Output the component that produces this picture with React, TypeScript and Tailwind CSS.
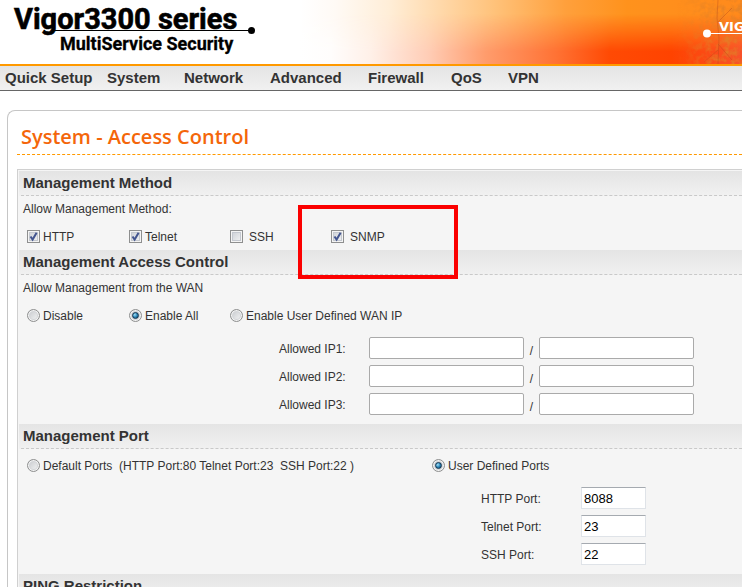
import type { ReactNode } from "react";

const navItems = [
  { label: "Quick Setup", width: "w-[102px]" },
  { label: "System", width: "w-[77px]" },
  { label: "Network", width: "w-[86px]" },
  { label: "Advanced", width: "w-[98px]" },
  { label: "Firewall", width: "w-[83px]" },
  { label: "QoS", width: "w-[57px]" },
  { label: "VPN", width: "w-[60px]" },
];

const allowedIps = ["Allowed IP1:", "Allowed IP2:", "Allowed IP3:"];

const ports = [
  { id: "http-port", label: "HTTP Port:", value: "8088" },
  { id: "telnet-port", label: "Telnet Port:", value: "23" },
  { id: "ssh-port", label: "SSH Port:", value: "22" },
];

function Logo() {
  return (
    <svg width="300" height="64" viewBox="0 0 300 64" className="shrink-0" fontFamily="Roboto, 'Liberation Sans', sans-serif" fontWeight="bold">
      <text x="14" y="29" fontSize="29" stroke="#000" strokeWidth="0.6">
        Vigor3300 series
      </text>
      <path d="M54 30.5H251" stroke="#000" />
      <circle cx="251.5" cy="30.5" r="3.5" />
      <text x="60" y="50" fontSize="18" stroke="#000" strokeWidth="0.3">
        MultiService Security
      </text>
    </svg>
  );
}

function Banner() {
  return (
    <svg viewBox="0 0 442 64" preserveAspectRatio="xMinYMid slice" className="h-16 min-w-0 flex-1">
      <defs>
        <linearGradient id="warm">
          <stop offset="0" stopColor="#fff" />
          <stop offset="0.08" stopColor="#fffaf5" />
          <stop offset="0.2" stopColor="#ffeed8" />
          <stop offset="0.44" stopColor="#ffc27a" />
          <stop offset="0.6" stopColor="#ffa03c" />
          <stop offset="0.74" stopColor="#ff921c" />
          <stop offset="1" stopColor="#ff8a1c" />
        </linearGradient>
        <linearGradient id="glow">
          <stop offset="0" stopColor="#fff" />
          <stop offset="0.07" stopColor="#fffdfc" />
          <stop offset="0.16" stopColor="#fff0e8" />
          <stop offset="0.29" stopColor="#ffcdb6" />
          <stop offset="0.42" stopColor="#ff9c6c" />
          <stop offset="0.58" stopColor="#ff7234" />
          <stop offset="0.7" stopColor="#ff4a04" />
          <stop offset="0.84" stopColor="#ff4300" />
          <stop offset="1" stopColor="#f8522a" />
        </linearGradient>
        <linearGradient id="rise" x2="0" y2="1">
          <stop offset="0.22" stopColor="#000" />
          <stop offset="0.5" stopColor="#777" />
          <stop offset="0.8" stopColor="#fff" />
        </linearGradient>
        <mask id="glowMask">
          <rect width="442" height="64" fill="url(#rise)" />
        </mask>
        <linearGradient id="fade">
          <stop offset="0.1" stopColor="#000" />
          <stop offset="0.7" stopColor="#ccc" />
        </linearGradient>
        <mask id="leafMask">
          <rect x="370" width="72" height="64" fill="url(#fade)" />
        </mask>
        <filter id="leaves" x="0" y="0" width="100%" height="100%">
          <feTurbulence type="fractalNoise" baseFrequency="0.16" numOctaves="3" seed="8" />
          <feColorMatrix values="0 0 0 0 0.75  0 0 0 0 0.22  0 0 0 0 0.02  2.6 0 0 0 -1.05" />
        </filter>
      </defs>
      <rect width="442" height="64" fill="url(#warm)" />
      <rect width="442" height="64" fill="url(#glow)" mask="url(#glowMask)" />
      <g mask="url(#leafMask)">
        <rect x="370" width="72" height="64" filter="url(#leaves)" />
        <path d="M418 0l-1 18 2 20-1 26M418 44l14 16M418 50l-14 12M418 22l14-14" stroke="#b8481a" strokeOpacity="0.5" fill="none" />
      </g>
      <path d="M407 33.5h35" stroke="#fff" />
      <circle cx="407" cy="33.5" r="4" fill="#fff" />
      <text x="419" y="31" fill="#fff" fontFamily="'DejaVu Sans', sans-serif" fontWeight="bold" fontSize="13">
        VIG
      </text>
    </svg>
  );
}

function Checkbox({ label, checked = false, gap = "gap-[3px]" }: { label: string; checked?: boolean; gap?: string }) {
  return (
    <label className={`flex items-center ${gap}`}>
      <span className="relative -mt-px block size-[13px]">
        <input
          type="checkbox"
          defaultChecked={checked}
          className="peer block size-[13px] appearance-none border border-[#8e8f8f] bg-linear-to-br from-[#c9cdd3] to-[#f6f6f6] shadow-[inset_0_0_0_1px_#f4f4f4,inset_0_0_0_2px_#c4c8cf]"
        />
        <svg viewBox="0 0 13 13" className="pointer-events-none absolute inset-0 hidden peer-checked:block">
          <path d="M3.5 6.5L5.6 9.6L9.6 2.8" fill="none" stroke="#43558f" strokeWidth="2" />
        </svg>
      </span>
      {label}
    </label>
  );
}

function Radio({ name, label, checked = false }: { name: string; label: string; checked?: boolean }) {
  return (
    <label className="flex items-center gap-[3px] whitespace-pre">
      <span className="relative -mt-px block size-[13px]">
        <input
          type="radio"
          name={name}
          defaultChecked={checked}
          className="peer block size-[13px] appearance-none rounded-full border border-[#8e8f8f] bg-linear-to-br from-[#c4c7cb] to-[#f8f8f8] shadow-[inset_0_0_0_1px_#f4f4f4,inset_0_0_0_2px_#d3d5d8]"
        />
        <span className="pointer-events-none absolute inset-[3px] hidden rounded-full border border-[#12344f] bg-radial-[at_35%_35%] from-[#a5e1f8] via-[#2b86b8] to-[#0c3f63] peer-checked:block" />
      </span>
      {label}
    </label>
  );
}

function Section({ title, children }: { title: string; children?: ReactNode }) {
  return (
    <section>
      <div className="ml-px bg-linear-to-b from-[#e4e4e4] to-[#f1f1f1] pl-0.5">
        <h2 className="border-b border-dashed border-[#c9c9c9] pl-0.5 text-[15px] leading-6 font-bold">{title}</h2>
      </div>
      {children}
    </section>
  );
}

export default function App() {
  return (
    <div className="h-screen overflow-hidden bg-white font-['Liberation_Sans',Arial,sans-serif] text-xs text-[#333]">
      <header>
        <div className="flex h-16">
          <Logo />
          <Banner />
        </div>
        <nav className="flex border-t-2 border-b border-t-[#ff9900] border-b-[#666] bg-linear-to-b from-[#e4e4e4] to-[#f1f1f1] pl-[5px]">
          {navItems.map((item) => (
            <a key={item.label} href="#" className={`${item.width} shrink-0 text-[15px] leading-6 font-bold whitespace-nowrap`}>
              {item.label}
            </a>
          ))}
        </nav>
      </header>

      <main className="mt-[19px] ml-[7px] rounded-tl-lg border-t border-l border-[#c6c6c6] pl-[9px]">
        <h1 className="border-b border-dashed border-[#ff9900] pt-3.5 pb-1.5 pl-1 font-['Open_Sans',sans-serif] text-xl leading-[23px] font-semibold text-[#f4660a]">
          System - Access Control
        </h1>

        <form className="mt-[14px] border-t border-l border-[#d0d0d0] bg-[#f5f5f5] pt-px">
          <Section title="Management Method">
            <div className="h-[54px] pt-[5px] leading-4">
              <p className="pl-[5px]">Allow Management Method:</p>
              <div className="mt-3 grid grid-cols-[102px_101px_101px_auto] pl-[9px]">
                <Checkbox label="HTTP" checked />
                <Checkbox label="Telnet" checked />
                <Checkbox label="SSH" gap="gap-1.5" />
                <div className="relative">
                  <Checkbox label="SNMP" checked gap="gap-1.5" />
                  {/* highlight around the SNMP option */}
                  <div className="pointer-events-none absolute -top-6 -left-[33px] h-[74px] w-40 border-4 border-[#fb0000]" />
                </div>
              </div>
            </div>
          </Section>

          <Section title="Management Access Control">
            <div className="pt-[5px] pb-[9px] leading-4">
              <p className="pl-[5px]">Allow Management from the WAN</p>
              <div className="mt-3 grid grid-cols-[102px_101px_auto] pl-[9px]">
                <Radio name="wan" label="Disable" />
                <Radio name="wan" label="Enable All" checked />
                <Radio name="wan" label="Enable User Defined WAN IP" />
              </div>
              <div className="mt-[13px] flex flex-col gap-1.5 pl-[261px]">
                {allowedIps.map((label, i) => (
                  <div key={label} className="flex items-center">
                    <label htmlFor={`ip-${i}`} className="w-[90px] shrink-0 pt-0.5">
                      {label}
                    </label>
                    <input id={`ip-${i}`} className="h-[22px] w-[155px] rounded-xs border border-[#aaa] bg-white px-1" />
                    <span className="w-[15px] pt-1.5 text-center">/</span>
                    <input aria-label={`${label} mask`} className="h-[22px] w-[155px] rounded-xs border border-[#aaa] bg-white px-1" />
                  </div>
                ))}
              </div>
            </div>
          </Section>

          <Section title="Management Port">
            <div className="grid grid-cols-[405px_auto] pt-[9px] pb-[9px] pl-[9px] leading-4">
              <Radio name="ports" label="Default Ports  (HTTP Port:80 Telnet Port:23  SSH Port:22 )" />
              <Radio name="ports" label="User Defined Ports" checked />
              <div className="col-start-2 mt-[13px] flex flex-col gap-1.5 pl-[49px]">
                {ports.map((port) => (
                  <div key={port.id} className="flex items-center">
                    <label htmlFor={port.id} className="w-[100px] shrink-0 pt-0.5">
                      {port.label}
                    </label>
                    <input
                      id={port.id}
                      defaultValue={port.value}
                      className="h-[22px] w-[65px] border border-[#dfe3e8] border-t-[#a5aab0] bg-white px-0.5 text-[13px] text-black"
                    />
                  </div>
                ))}
              </div>
            </div>
          </Section>

          <Section title="PING Restriction" />
        </form>
      </main>
    </div>
  );
}
